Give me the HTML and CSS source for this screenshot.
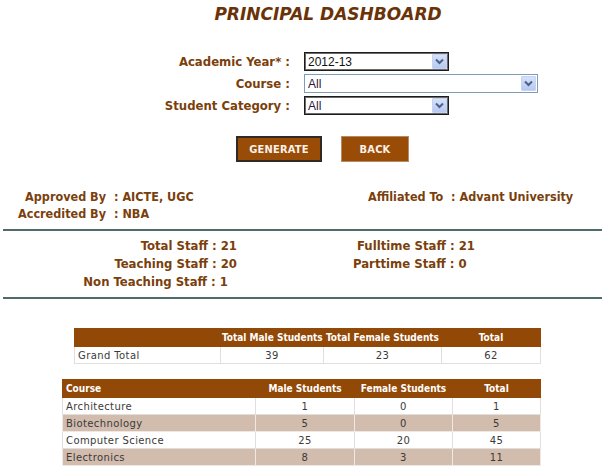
FILE: index.html
```html
<!DOCTYPE html>
<html>
<head>
<meta charset="utf-8">
<link rel="stylesheet" href="styles.css">
</head>
<body>
<div class="page">
  <h1 class="title">PRINCIPAL DASHBOARD</h1>

  <div class="form">
    <div class="lbl">Academic Year* :</div>
    <div class="sel sel-short sel-focus"><span class="val">2012-13</span><span class="arrow"><svg width="9" height="7" viewBox="0 0 9 7"><path d="M1 1.5 L4.5 5 L8 1.5" fill="none" stroke="#4d6185" stroke-width="2"/></svg></span></div>
    <div class="lbl">Course :</div>
    <div class="sel sel-long"><span class="val all">All</span><span class="arrow"><svg width="9" height="7" viewBox="0 0 9 7"><path d="M1 1.5 L4.5 5 L8 1.5" fill="none" stroke="#4d6185" stroke-width="2"/></svg></span></div>
    <div class="lbl">Student Category :</div>
    <div class="sel sel-short sel-focus"><span class="val all">All</span><span class="arrow"><svg width="9" height="7" viewBox="0 0 9 7"><path d="M1 1.5 L4.5 5 L8 1.5" fill="none" stroke="#4d6185" stroke-width="2"/></svg></span></div>
  </div>

  <div class="buttons">
    <div class="btn btn-gen">GENERATE</div>
    <div class="btn btn-back">BACK</div>
  </div>

  <div class="info">
    <div class="info-left">
      <div class="k">Approved By</div><div class="v">: AICTE, UGC</div>
      <div class="k">Accredited By</div><div class="v">: NBA</div>
    </div>
    <div class="info-right">Affiliated To&nbsp; : Advant University</div>
  </div>

  <div class="rule"></div>

  <div class="staff">
    <div class="s-left">Total Staff : 21</div><div class="s-right">Fulltime Staff : 21</div>
    <div class="s-left">Teaching Staff : 20</div><div class="s-right s-pt">Parttime Staff : 0</div>
    <div class="s-left s-nt">Non Teaching Staff : 1</div><div></div>
  </div>

  <div class="rule rule2"></div>

  <table class="grid t1">
    <colgroup><col class="c1"><col class="c2"><col class="c3"><col class="c4"></colgroup>
    <tr class="head">
      <td></td><td>Total Male Students</td><td>Total Female Students</td><td>Total</td>
    </tr>
    <tr>
      <td class="name">Grand Total</td><td>39</td><td>23</td><td>62</td>
    </tr>
  </table>

  <table class="grid t2">
    <colgroup><col class="c1"><col class="c2"><col class="c3"><col class="c4"></colgroup>
    <tr class="head">
      <td class="name">Course</td><td>Male Students</td><td>Female Students</td><td>Total</td>
    </tr>
    <tr><td class="name">Architecture</td><td>1</td><td>0</td><td>1</td></tr>
    <tr class="alt"><td class="name">Biotechnology</td><td>5</td><td>0</td><td>5</td></tr>
    <tr><td class="name">Computer Science</td><td>25</td><td>20</td><td>45</td></tr>
    <tr class="alt"><td class="name">Electronics</td><td>8</td><td>3</td><td>11</td></tr>
  </table>
</div>
</body>
</html>
```

FILE: styles.css
```css
html, body {
  margin: 0;
  padding: 0;
  background: #ffffff;
}
.page {
  width: 602px;
  font-family: "DejaVu Sans Condensed", "DejaVu Sans", sans-serif;
  color: #7b3f0d;
}
.title {
  margin: 3px 0 0 0;
  height: 22px;
  line-height: 22px;
  font-size: 17px;
  font-weight: bold;
  font-style: italic;
  text-align: center;
  padding-left: 54px;
  color: #6a3207;
  font-family: "DejaVu Sans", sans-serif;
}
.form {
  margin-top: 27px;
  display: grid;
  grid-template-columns: 290px auto;
  column-gap: 14px;
  row-gap: 3px;
  align-items: center;
}
.lbl {
  text-align: right;
  font-size: 13px;
  font-weight: bold;
  line-height: 19px;
  color: #7b3f0d;
}
.sel {
  height: 19px;
  box-sizing: border-box;
  border: 1px solid #7f9db9;
  display: flex;
  align-items: center;
  justify-content: space-between;
  padding: 0 1px 0 3px;
  background: #fff;
}
.sel-short { width: 145px; }
.sel-long { width: 234px; }
.sel-focus { border: 1px solid #1c1c1c; box-shadow: inset 0 0 0 1px #6b6b6b; }
.val {
  font-family: "Liberation Sans", Arial, sans-serif;
  font-size: 12px;
  color: #111;
}
.val.all { color: #2c1540; }
.arrow {
  width: 15px;
  height: 15px;
  box-sizing: border-box;
  border: 1px solid #c6d3f0;
  background: linear-gradient(#d5e1fb, #b7c9f2);
  display: flex;
  align-items: center;
  justify-content: center;
  border-radius: 1px;
}
.buttons {
  margin-top: 21px;
  display: flex;
  gap: 19px;
  padding-left: 236px;
}
.btn {
  height: 26px;
  box-sizing: border-box;
  background: #994c05;
  color: #fbf1ea;
  font-size: 11px;
  font-weight: bold;
  display: flex;
  align-items: center;
  justify-content: center;
  letter-spacing: 0.2px;
}
.btn-gen { width: 86px; border: 2px solid #2f2a26; }
.btn-back { width: 68px; border: 1px solid #b58a6a; }
.info {
  margin-top: 26px;
  display: flex;
  font-size: 12.5px;
  font-weight: bold;
  line-height: 17px;
}
.info-left {
  display: grid;
  grid-template-columns: 106px auto;
  column-gap: 8px;
  align-content: start;
  width: 368px;
}
.k { text-align: right; }
.info-right { white-space: nowrap; }
.rule {
  margin: 7px 0 0 3px;
  height: 2px;
  background: #4f6c6a;
}
.staff {
  margin-top: 6px;
  display: grid;
  grid-template-columns: 237px auto;
  column-gap: 120px;
  font-size: 13px;
  font-weight: bold;
  line-height: 18px;
}
.s-left { text-align: right; }
.s-nt { margin-right: 9px; }
.s-pt { margin-left: -4px; }
.rule2 { margin-top: 6px; }
.grid {
  border-collapse: collapse;
  table-layout: fixed;
  font-family: "DejaVu Sans", sans-serif;
  font-size: 10px;
  color: #3a3a3a;
}
.grid td {
  border: 1px solid #e2dedb;
  height: 16px;
  padding: 0 3px;
  text-align: center;
  letter-spacing: 0.4px;
  white-space: nowrap;
  overflow: hidden;
}
.grid td.name { text-align: left; }
.grid .head td {
  background: #924806;
  color: #fff;
  font-family: "DejaVu Sans Condensed", "DejaVu Sans", sans-serif;
  font-weight: bold;
  border: 1px solid #924806;
  border-left: 1px solid #f0e6de;
  letter-spacing: 0;
  height: 17px;
  padding: 0 1px;
}
.grid .head td.name { padding-left: 3px; }
.grid .head td:first-child { border-left: 1px solid #924806; }
.grid .alt td { background: #d2bcae; border-color: #efe8e3; }
.t1 {
  margin: 29px 0 0 74px;
  width: 466px;
}
.t1 .c1 { width: 146px; }
.t1 .c2 { width: 103px; }
.t1 .c3 { width: 118px; }
.t1 .c4 { width: 99px; }
.t2 {
  margin: 15px 0 0 62px;
  width: 478px;
}
.t2 .c1 { width: 193px; }
.t2 .c2 { width: 99px; }
.t2 .c3 { width: 98px; }
.t2 .c4 { width: 88px; }
```
